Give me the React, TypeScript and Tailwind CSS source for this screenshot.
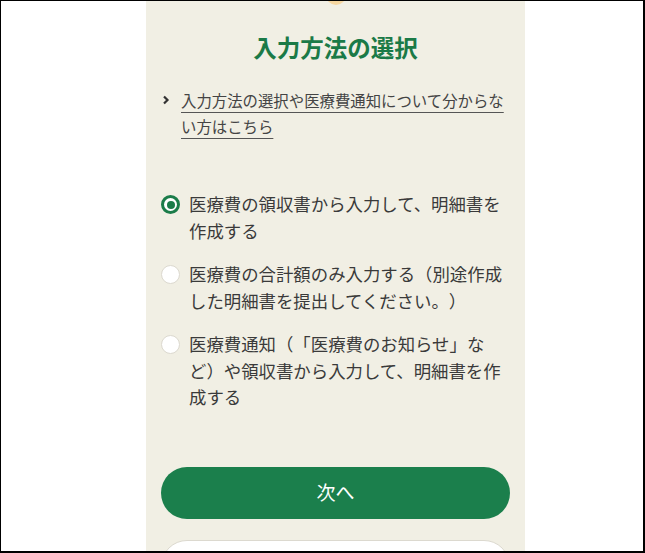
import React from "react";

const font = { fontFamily: '"Noto Sans CJK JP", "Noto Sans", sans-serif' };

function Radio({ checked }: { checked?: boolean }) {
  if (checked) {
    return (
      <span className="mt-[4px] flex h-[19px] w-[19px] shrink-0 items-center justify-center rounded-full border-[3px] border-[#1b7c49] bg-white">
        <span className="h-[8px] w-[8px] rounded-full bg-[#1b7c49]" />
      </span>
    );
  }
  return <span className="mt-[4px] block h-[19px] w-[19px] shrink-0 rounded-full border border-[#dcd9cf] bg-white" />;
}

function Option({ checked, text }: { checked?: boolean; text: string }) {
  return (
    <label className="flex items-start gap-[9px]">
      <Radio checked={checked} />
      <span className="text-[17.4px] leading-[26.5px] text-[#3a3a3a]">{text}</span>
    </label>
  );
}

export default function App() {
  return (
    <div
      className="h-[553px] w-[645px] overflow-hidden border-t border-l border-r-2 border-b-2 border-black bg-white [text-spacing-trim:space-all]"
      style={font}
    >
      <div className="relative ml-[145px] flex h-full w-[379px] flex-col bg-[#f1efe4] px-[15px] pt-[30px]">
        <div className="absolute left-1/2 top-[-16px] h-[20px] w-[20px] -translate-x-1/2 rounded-full bg-[#f6d7a0]" />
        <h1 className="text-center text-[23.5px] font-bold leading-[32px] text-[#1b7a47]">入力方法の選択</h1>
        <div className="mt-[4px] h-[2px] w-full bg-[#1e7d4a]" />
        <div className="mt-[20px] flex items-start">
          <svg className="ml-[1px] mt-[8px] shrink-0" width="8" height="10" viewBox="0 0 8 10">
            <path d="M2 1.5 L5.5 5 L2 8.5" fill="none" stroke="#333" strokeWidth="2.2" />
          </svg>
          <a className="ml-[11px] text-[15.4px] leading-[26px] text-[#444] underline decoration-[#555] underline-offset-[5px]">
            入力方法の選択や医療費通知について分からない方はこちら
          </a>
        </div>
        <div className="mt-[52px] flex flex-col gap-[17px]">
          <Option checked text="医療費の領収書から入力して、明細書を作成する" />
          <Option text="医療費の合計額のみ入力する（別途作成した明細書を提出してください。）" />
          <Option text="医療費通知（「医療費のお知らせ」など）や領収書から入力して、明細書を作成する" />
        </div>
        <button className="mt-[56px] h-[52px] w-full shrink-0 rounded-full bg-[#1b7f4c] text-[19px] text-white">
          次へ
        </button>
        <button className="mt-[21px] h-[52px] w-full shrink-0 rounded-full border border-[#dcd9cf] bg-white" />
      </div>
    </div>
  );
}
